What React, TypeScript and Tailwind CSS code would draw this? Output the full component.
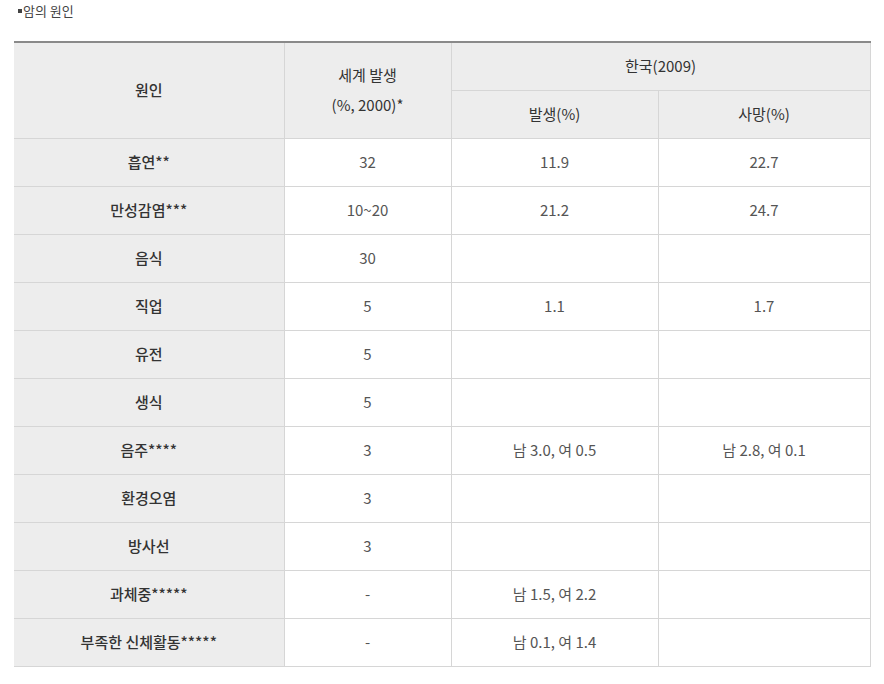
const rows: [string, string, string, string][] = [
  ["흡연**", "32", "11.9", "22.7"],
  ["만성감염***", "10~20", "21.2", "24.7"],
  ["음식", "30", "", ""],
  ["직업", "5", "1.1", "1.7"],
  ["유전", "5", "", ""],
  ["생식", "5", "", ""],
  ["음주****", "3", "남 3.0, 여 0.5", "남 2.8, 여 0.1"],
  ["환경오염", "3", "", ""],
  ["방사선", "3", "", ""],
  ["과체중*****", "-", "남 1.5, 여 2.2", ""],
  ["부족한 신체활동*****", "-", "남 0.1, 여 1.4", ""],
]

export default function App() {
  return (
    <div
      className="w-[884px] h-[684px] bg-white text-[#333]"
      style={{ fontFamily: '"Noto Sans CJK KR", "Noto Sans", sans-serif' }}
    >
      <p className="pl-[18px] pt-[1px] text-[13px] leading-[20px] text-[#444]">
        <span className="inline-block w-[4px] h-[4px] bg-[#444] align-[3px] mr-[1px]" />암의 원인
      </p>
      <div className="pl-[14px] pt-[20px]">
        <table className="w-[856px] table-fixed border-collapse border-t-2 border-b border-t-[#8a8a8a] border-b-[#8a8a8a] text-[15px]">
          <colgroup>
            <col className="w-[270px]" />
            <col className="w-[167px]" />
            <col className="w-[207px]" />
            <col className="w-[212px]" />
          </colgroup>
          <thead>
            <tr className="h-[48px]">
              <th rowSpan={2} className="bg-[#ededed] border-r border-b border-[#d6d6d6] font-medium text-[#333]">
                원인
              </th>
              <th rowSpan={2} className="bg-[#ededed] border-x border-b border-[#d6d6d6] font-normal leading-[30px] text-[#333]">
                세계 발생
                <br />
                (%, 2000)*
              </th>
              <th colSpan={2} className="bg-[#ededed] border-x border-b border-[#d6d6d6] font-normal text-[#333]">
                한국(2009)
              </th>
            </tr>
            <tr className="h-[48px]">
              <th className="bg-[#ededed] border border-[#d6d6d6] font-normal text-[#333]">발생(%)</th>
              <th className="bg-[#ededed] border border-[#d6d6d6] font-normal text-[#333]">사망(%)</th>
            </tr>
          </thead>
          <tbody>
            {rows.map((r, i) => (
              <tr key={i} className="h-[48px]">
                <td className="bg-[#ededed] border-r border-b border-[#d6d6d6] text-center font-medium text-[#333]">
                  {r[0]}
                </td>
                <td className="border border-[#d6d6d6] text-center text-[#555]">{r[1]}</td>
                <td className="border border-[#d6d6d6] text-center text-[#555]">{r[2]}</td>
                <td className="border border-[#d6d6d6] text-center text-[#555]">{r[3]}</td>
              </tr>
            ))}
          </tbody>
        </table>
      </div>
    </div>
  )
}
